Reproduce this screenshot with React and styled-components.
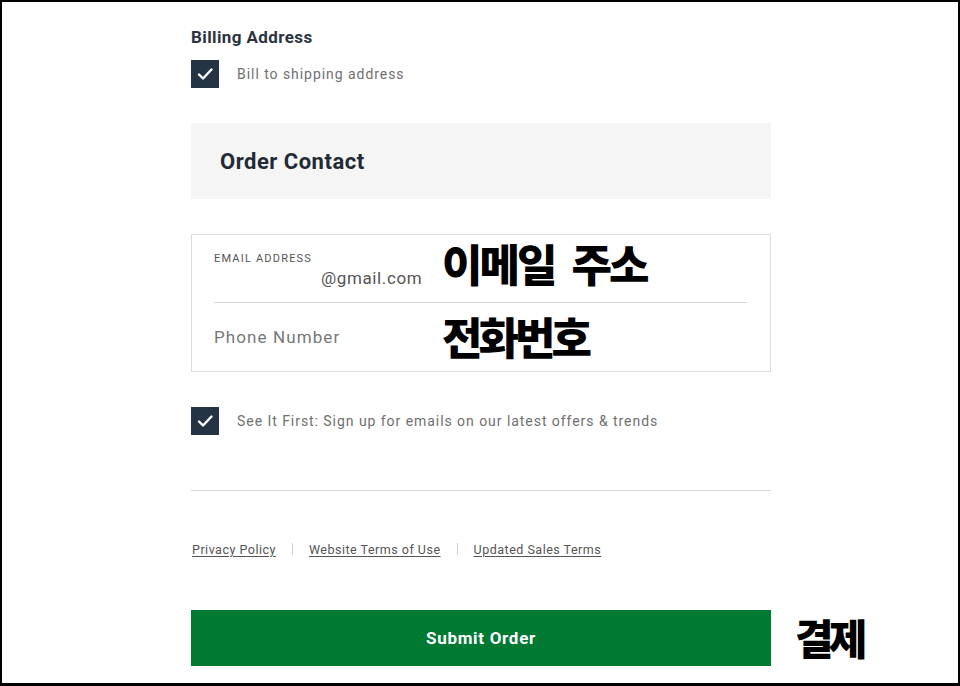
import React from "react";
import styled, { createGlobalStyle } from "styled-components";

const GlobalStyle = createGlobalStyle`
  html, body {
    margin: 0;
    padding: 0;
    background: #ffffff;
  }
  body {
    font-family: Roboto, "Liberation Sans", "Noto Sans CJK KR", sans-serif;
  }
`;

const Frame = styled.div`
  box-sizing: border-box;
  width: 960px;
  height: 686px;
  border: 2px solid #000;
  border-bottom-width: 3px;
  background: #fff;
  overflow: hidden;
`;

const Column = styled.div`
  width: 580px;
  margin-left: 189px;
  padding-top: 25px;
  display: flex;
  flex-direction: column;
`;

const SectionTitle = styled.h3`
  margin: 0;
  font-size: 17px;
  line-height: 20px;
  font-weight: 700;
  color: #2b3440;
  letter-spacing: 0.4px;
`;

const CheckRow = styled.label`
  display: flex;
  align-items: center;
  gap: 18px;
  margin-top: ${(p) => p.$top}px;
  height: 28px;
`;

const Box = styled.span`
  width: 28px;
  height: 28px;
  flex: none;
  background: #243444;
  display: flex;
  align-items: center;
  justify-content: center;
`;

const CheckText = styled.span`
  font-size: 14px;
  color: #6f6f6f;
  letter-spacing: 0.95px;
`;

const Panel = styled.div`
  margin-top: 35px;
  height: 76px;
  background: #f5f5f5;
  display: flex;
  align-items: center;
  padding-left: 29px;
`;

const PanelTitle = styled.h2`
  margin: 0;
  font-size: 22px;
  font-weight: 700;
  color: #222b35;
  letter-spacing: 0.5px;
`;

const InputBox = styled.div`
  margin-top: 35px;
  border: 1px solid #dcdcdc;
  display: flex;
  flex-direction: column;
`;

const Field = styled.div`
  height: ${(p) => (p.$last ? 68 : 67)}px;
  margin: 0 23px 0 22px;
  border-bottom: ${(p) => (p.$last ? "none" : "1px solid #d6d6d6")};
  display: flex;
  align-items: center;
`;

const FieldBody = styled.div`
  width: 228px;
  flex: none;
  display: flex;
  flex-direction: column;
`;

const FieldLabel = styled.span`
  font-size: 11px;
  letter-spacing: 1.2px;
  color: #555;
  margin-top: 2px;
`;

const FieldValue = styled.span`
  font-size: 17px;
  color: #555;
  letter-spacing: 0.6px;
  padding-left: 107px;
  margin-top: 3px;
`;

const Placeholder = styled.span`
  font-size: 17px;
  color: #777;
  letter-spacing: 1.1px;
`;

const Note = styled.span`
  font-family: "Noto Sans CJK KR", sans-serif;
  font-weight: 900;
  font-size: ${(p) => p.$size || 44}px;
  line-height: 1;
  color: #000;
  letter-spacing: ${(p) => p.$spacing ?? -4}px;
  word-spacing: ${(p) => p.$words ?? 0}px;
  margin-top: ${(p) => p.$shift ?? 0}px;
  white-space: nowrap;
`;

const Divider = styled.hr`
  margin: 55px 0 0;
  border: none;
  border-top: 1px solid #d9d9d9;
  height: 0;
`;

const Links = styled.nav`
  margin-top: 48px;
  display: flex;
  align-items: center;
  height: 20px;
  padding-left: 1px;
`;

const LegalLink = styled.a`
  font-size: 12.5px;
  color: #555;
  letter-spacing: 0.5px;
  text-decoration: underline;
  text-underline-offset: 2px;
  cursor: pointer;
`;

const Pipe = styled.span`
  width: 1px;
  height: 12px;
  background: #cfcfcf;
  margin: 0 ${(p) => p.$gap}px;
`;

const SubmitRow = styled.div`
  margin-top: 51px;
  display: flex;
  align-items: center;
  gap: 24px;
  width: 700px;
`;

const SubmitButton = styled.button`
  width: 580px;
  height: 56px;
  flex: none;
  border: none;
  background: #007a33;
  color: #fff;
  font-family: Roboto, "Liberation Sans", sans-serif;
  font-size: 17px;
  font-weight: 700;
  letter-spacing: 0.7px;
  cursor: pointer;
`;

const Check = () => (
  <svg width="28" height="28" viewBox="0 0 28 28">
    <path
      d="M8 14.5 L12 18.5 L20.5 9.5"
      fill="none"
      stroke="#fff"
      strokeWidth="2.4"
      strokeLinecap="round"
      strokeLinejoin="round"
    />
  </svg>
);

const App = () => {
  return (
    <Frame>
      <GlobalStyle />
      <Column>
        <SectionTitle>Billing Address</SectionTitle>
        <CheckRow $top={13}>
          <Box>
            <Check />
          </Box>
          <CheckText>Bill to shipping address</CheckText>
        </CheckRow>

        <Panel>
          <PanelTitle>Order Contact</PanelTitle>
        </Panel>

        <InputBox>
          <Field>
            <FieldBody>
              <FieldLabel>EMAIL ADDRESS</FieldLabel>
              <FieldValue>@gmail.com</FieldValue>
            </FieldBody>
            <Note $spacing={-3} $words={10} $shift={-12}>
              이메일 주소
            </Note>
          </Field>
          <Field $last>
            <FieldBody>
              <Placeholder>Phone Number</Placeholder>
            </FieldBody>
            <Note $shift={-2}>전화번호</Note>
          </Field>
        </InputBox>

        <CheckRow $top={35}>
          <Box>
            <Check />
          </Box>
          <CheckText>
            See It First: Sign up for emails on our latest offers &amp; trends
          </CheckText>
        </CheckRow>

        <Divider />

        <Links>
          <LegalLink>Privacy Policy</LegalLink>
          <Pipe $gap={16} />
          <LegalLink>Website Terms of Use</LegalLink>
          <Pipe $gap={16} />
          <LegalLink>Updated Sales Terms</LegalLink>
        </Links>

        <SubmitRow>
          <SubmitButton>Submit Order</SubmitButton>
          <Note $size={42} $spacing={-5} $shift={-2}>결제</Note>
        </SubmitRow>
      </Column>
    </Frame>
  );
};

export default App;
